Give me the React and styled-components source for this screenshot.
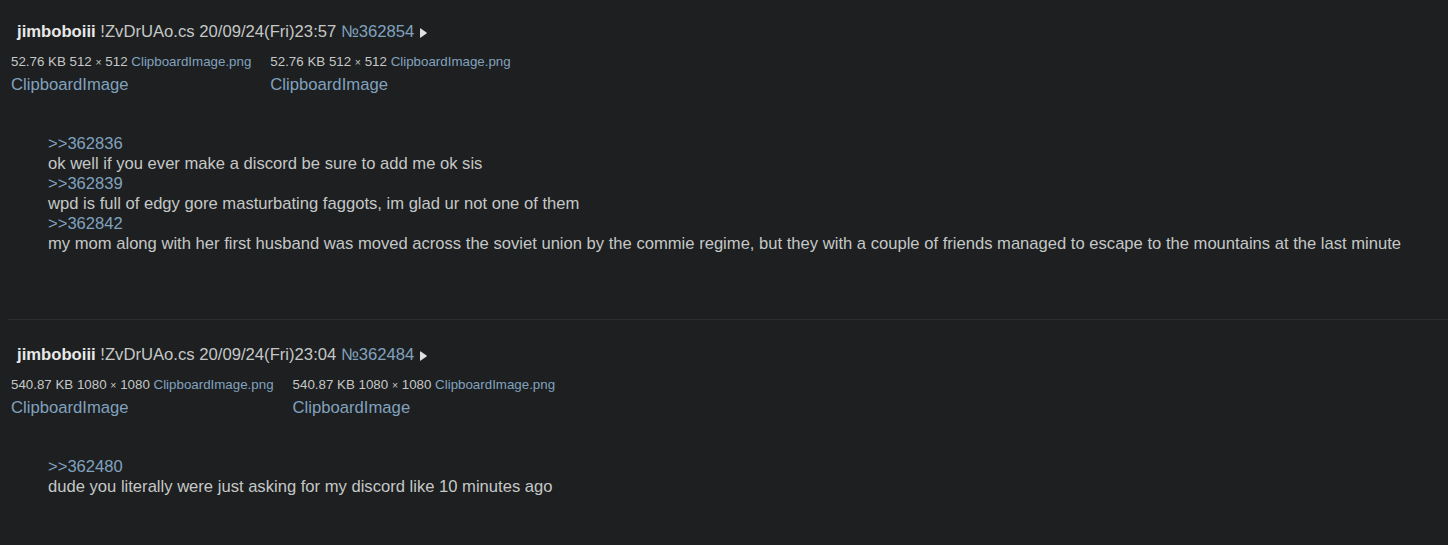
import React from "react";
import styled, { createGlobalStyle } from "styled-components";

const Global = createGlobalStyle`
  html, body { margin: 0; padding: 0; background: #1d1f21; }
  body { font-family: "Liberation Sans", Arial, sans-serif; color: #c5c8c6; }
`;

const Page = styled.div`
  padding: 0 0 0 8px;
  min-height: 545px;
  box-sizing: border-box;
`;

const Post = styled.article`
  padding-top: 22px;
`;

const Header = styled.div`
  display: flex;
  align-items: center;
  gap: 4.6px;
  height: 20px;
  line-height: 20px;
  font-size: 16.67px;
  padding-left: 9px;
`;

const Name = styled.span`
  font-weight: bold;
  color: #e8e9e8;
`;

const Plain = styled.span`
  color: #c5c8c6;
`;

const Link = styled.a`
  color: #81a2be;
  text-decoration: none;
`;

const Arrow = styled.svg`
  width: 7px;
  height: 10px;
  margin-left: 1px;
  margin-top: 1px;
  fill: #e0e0e0;
`;

const Files = styled.div`
  display: flex;
  gap: 19px;
  margin-top: 12px;
  padding-left: 3px;
`;

const FileBlock = styled.div`
  display: flex;
  flex-direction: column;
`;

const FileInfo = styled.div`
  font-size: 13.33px;
  line-height: 16px;
  color: #c5c8c6;
  white-space: nowrap;
`;

const Times = styled.span`
  font-size: 10.5px;
`;

const FileName = styled.a`
  margin-top: 5px;
  font-size: 16.67px;
  line-height: 20px;
  color: #81a2be;
  text-decoration: none;
`;

const Quote = styled.blockquote`
  margin: 39px 0 0 40px;
  font-size: 16.6px;
  line-height: 20px;
`;

const Line = styled.div``;

const Divider = styled.hr`
  border: none;
  border-top: 1px solid #2c2e31;
  margin: 65px 0 3px 0;
`;

const posts = [
  {
    no: "362854",
    time: "20/09/24(Fri)23:57",
    size: "52.76 KB",
    dims: ["512", "512"],
    lines: [
      { q: true, t: ">>362836" },
      { t: "ok well if you ever make a discord be sure to add me ok sis" },
      { q: true, t: ">>362839" },
      { t: "wpd is full of edgy gore masturbating faggots, im glad ur not one of them" },
      { q: true, t: ">>362842" },
      {
        t: "my mom along with her first husband was moved across the soviet union by the commie regime, but they with a couple of friends managed to escape to the mountains at the last minute",
      },
    ],
  },
  {
    no: "362484",
    time: "20/09/24(Fri)23:04",
    size: "540.87 KB",
    dims: ["1080", "1080"],
    lines: [
      { q: true, t: ">>362480" },
      { t: "dude you literally were just asking for my discord like 10 minutes ago" },
    ],
  },
];

function PostView({ p }) {
  return (
    <Post>
      <Header>
        <Name>jimboboiii</Name>
        <Plain>!ZvDrUAo.cs</Plain>
        <Plain>{p.time}</Plain>
        <Link href="#">№{p.no}</Link>
        <Arrow viewBox="0 0 7 10">
          <path d="M0 0.8 Q0 0 0.8 0.5 L6.5 4.4 Q7 5 6.5 5.6 L0.8 9.5 Q0 10 0 9.2 Z" />
        </Arrow>
      </Header>
      <Files>
        {[0, 1].map((i) => (
          <FileBlock key={i}>
            <FileInfo>
              {p.size} {p.dims[0]} <Times>×</Times> {p.dims[1]}{" "}
              <Link href="#">ClipboardImage.png</Link>
            </FileInfo>
            <FileName href="#">ClipboardImage</FileName>
          </FileBlock>
        ))}
      </Files>
      <Quote>
        {p.lines.map((l, i) =>
          l.q ? (
            <Line key={i}>
              <Link href="#">{l.t}</Link>
            </Line>
          ) : (
            <Line key={i}>{l.t}</Line>
          )
        )}
      </Quote>
    </Post>
  );
}

export default function App() {
  return (
    <Page>
      <Global />
      <PostView p={posts[0]} />
      <Divider />
      <PostView p={posts[1]} />
    </Page>
  );
}
